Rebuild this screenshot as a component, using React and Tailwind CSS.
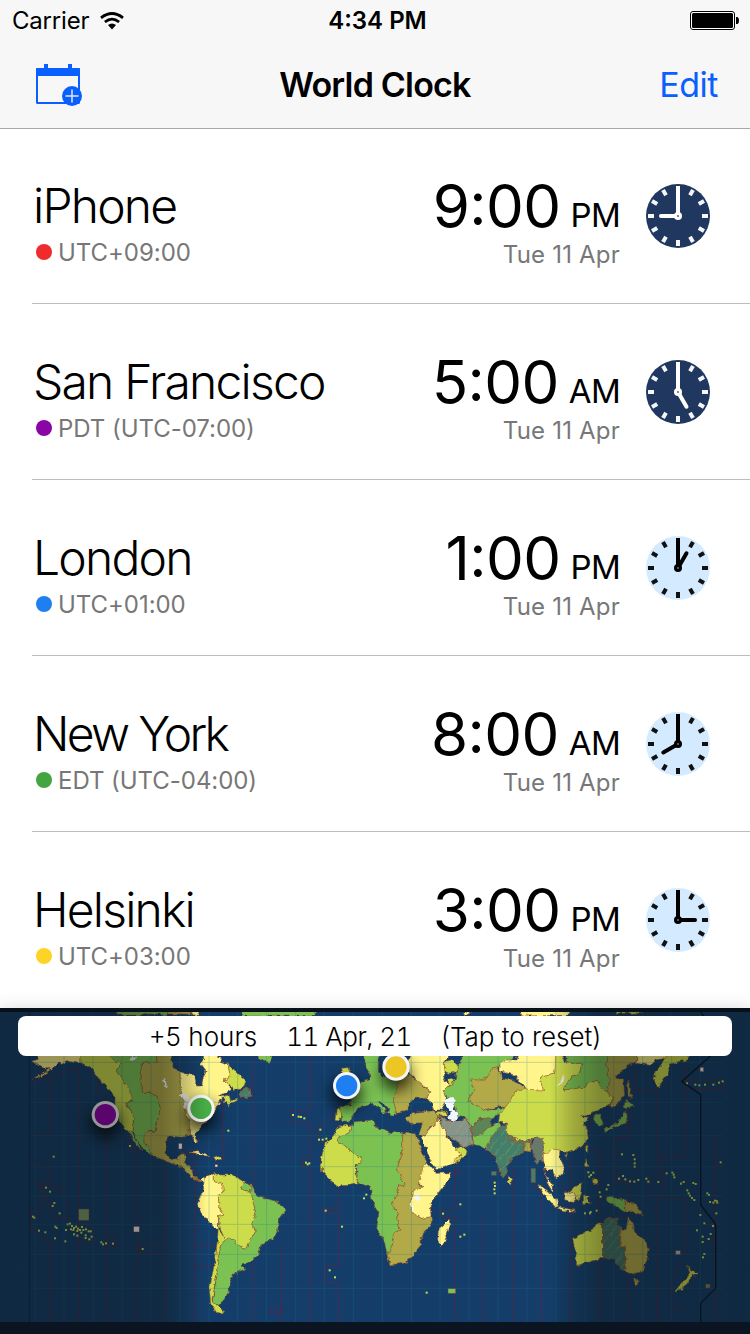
const cities = [
  { name: "iPhone", zone: "UTC+09:00", dot: "bg-[#f02b2d]", time: ["9", "00"], period: "PM", hour: 9, night: true },
  { name: "San Francisco", zone: "PDT (UTC-07:00)", dot: "bg-[#8a05a5]", time: ["5", "00"], period: "AM", hour: 5, night: true },
  { name: "London", zone: "UTC+01:00", dot: "bg-[#1e80f0]", time: ["1", "00"], period: "PM", hour: 1 },
  { name: "New York", zone: "EDT (UTC-04:00)", dot: "bg-[#43a441]", time: ["8", "00"], period: "AM", hour: 8, tight: true },
  { name: "Helsinki", zone: "UTC+03:00", dot: "bg-[#fdd327]", time: ["3", "00"], period: "PM", hour: 3 },
];

const LIME = "#cddc4b";
const GREEN = "#7bc253";
const OLIVE = "#b2aa48";
const PALE = "#fff58a";
const TEAL = "#447f69";
const GREY = "#86948a";

// Time zone areas, grouped by map section; x is the section's left edge
const sections = [
  {
    x: 0,
    areas: [
      [PALE, "105,150 243,150 243,190 225,188 200,182 185,190 178,186 165,200 150,210 120,230 92,243 120,225 150,205 135,207 120,198 105,188 95,183 115,178"],
      [LIME, "243,140 340,140 365,190 350,215 365,235 390,265 400,295 380,310 385,325 400,345 400,392 390,400 362,372 345,330 345,290 325,265 300,240 275,205 243,188"],
      [GREEN, "315,150 470,150 470,187 424,187 424,277 450,277 475,290 480,325 475,355 465,392 435,397 432,425 460,470 440,455 410,420 400,392 400,345 385,325 380,310 398,300 388,265 350,215 365,188 345,185"],
      [OLIVE, "470,150 525,150 512,180 518,200 540,215 542,290 560,310 555,340 570,360 567,405 545,412 510,408 497,422 495,460 510,478 532,480 540,462 557,462 550,492 575,500 578,525 595,540 575,535 545,500 520,492 460,468 432,425 432,397 465,395 475,355 480,325 475,290 450,277 424,277 424,187 470,187"],
      [PALE, "540,215 560,222 582,225 590,240 590,258 605,258 610,235 618,215 600,190 612,178 605,150 645,150 665,185 685,195 690,235 672,240 690,255 690,270 655,288 670,290 650,320 640,340 620,365 600,385 585,405 596,430 588,432 575,405 568,400 570,360 555,340 560,310 542,290"],
      [LIME, "685,190 700,210 720,228 738,245 722,268 700,268 690,255 672,240 690,232"],
      [LIME, "665,290 690,285 695,302 715,297 705,308 685,314 672,304"],
      [TEAL, "718,282 735,262 755,270 755,292 722,292"],
      [GREEN, "385,390 395,390 405,415 426,448 405,432"],
      [PALE, "570,457 590,452 630,466 618,468 590,460"],
      [LIME, "638,472 650,468 664,477 645,481"],
      [PALE, "582,533 600,542 612,530 618,548 606,546 598,542"],
      [PALE, "620,525 640,518 640,545 668,550 670,575 655,585 657,620 672,645 655,650 656,692 640,680 605,640 592,610 600,590 610,570 612,545"],
      [LIME, "640,520 660,525 700,525 735,547 725,560 735,575 755,577 758,600 768,640 757,665 767,695 750,718 740,748 725,745 690,714 675,718 662,690 655,650 672,645 657,620 655,585 670,575 668,550 640,545"],
      [LIME, "655,688 664,700 675,718 668,722 655,760 655,800 645,850 636,900 650,915 665,932 675,938 650,938 632,908 628,870 638,820 648,765"],
      [GREEN, "675,718 690,714 725,745 740,748 750,720 767,695 757,665 768,640 758,600 750,555 765,580 783,590 830,605 858,627 838,655 833,690 822,717 800,722 782,735 775,765 750,788 725,795 732,808 700,822 690,850 683,880 660,915 637,905 645,860 655,800 655,760 668,722"],
      [GREEN, "725,558 735,549 752,555 752,575 735,575"],
      [GREEN, "350,30 505,30 500,45 350,45"],
      [OLIVE, "505,30 570,30 570,42 505,42"],
      [PALE, "570,30 600,30 598,46 575,44"],
      [GREEN, "725,30 950,30 945,48 730,48"],
    ],
  },
  {
    x: 750,
    areas: [
      [GREEN, "15,150 65,150 60,187 45,184 25,176"],
      [LIME, "265,385 290,374 303,378 300,395 262,415 262,423 333,475 333,492 315,497 318,520 323,535 320,552 300,555 265,558 240,540 215,515 213,480 222,440 240,420 255,400"],
      [GREEN, "303,378 310,366 370,360 372,378 405,392 425,403 433,390 455,398 455,460 440,510 468,555 445,560 445,590 428,600 430,625 445,640 440,655 450,690 430,700 425,757 410,755 400,715 380,690 387,640 366,600 362,562 340,558 323,550 320,498 333,492 333,475 262,423 262,415 300,395"],
      [OLIVE, "455,398 498,402 510,440 528,485 515,530 505,550 518,560 487,575 482,620 490,640 515,655 543,650 545,675 515,705 512,735 485,775 460,790 420,794 410,757 425,757 430,700 450,690 440,655 445,640 430,625 428,600 445,590 445,560 468,555 440,510 455,460"],
      [PALE, "528,485 545,505 560,520 605,518 600,535 555,590 540,610 543,650 515,655 490,640 482,620 487,575 518,560 505,545"],
      [PALE, "597,658 600,675 585,720 575,737 563,725 565,690 580,678"],
      [PALE, "515,415 540,385 565,360 585,385 592,410 610,432 620,450 632,455 630,475 612,487 580,500 560,512 545,485"],
      [LIME, "634,440 655,455 640,475 615,488 612,478 632,470 630,455 615,450"],
      [GREEN, "345,150 385,150 385,215 400,232 440,225 448,235 440,270 430,300 440,340 430,345 405,335 420,333 395,306 383,302 405,330 402,342 382,318 368,310 345,318 325,326 310,345 298,364 275,362 272,320 300,318 305,300 285,290 310,275 335,245 360,240 358,215 345,195"],
      [LIME, "262,328 274,328 270,360 258,358"],
      [LIME, "275,205 297,203 300,222 278,222"],
      [OLIVE, "480,222 495,240 510,240 520,258 543,275 530,292 495,295 475,310 470,328 460,336 440,340 430,300 440,270 445,235"],
      [OLIVE, "468,350 500,336 555,332 568,345 562,365 540,382 520,408 510,400 517,368 480,370 470,362"],
      [PALE, "490,150 610,150 582,185 585,215 580,240 600,255 580,275 590,300 575,330 553,330 545,312 530,293 543,275 520,255 495,235 478,220 470,190"],
      [GREEN, "655,150 810,150 780,185 750,200 722,205 722,225 690,240 662,240 675,268 655,300 665,310 690,320 702,333 750,325 775,320 770,336 750,345 720,355 690,355 665,378 645,350 620,345 610,300 590,290 580,275 600,255 620,238 622,195"],
      [LIME, "582,185 605,180 622,195 620,215 600,220 585,213"],
      [LIME, "590,240 605,235 615,238 600,255"],
      [LIME, "560,335 590,333 598,348 575,348"],
      [OLIVE, "662,240 690,240 720,225 722,205 745,200 755,235 790,240 830,270 795,275 775,320 750,318 702,333 690,320 665,310 655,300 675,268"],
      [GREY, "567,348 590,362 620,362 650,358 665,380 665,410 672,432 640,440 600,412 580,385"],
      ["#5d8456", "665,380 690,357 725,352 720,380 700,400 668,410"],
      [GREEN, "668,410 700,400 725,375 745,366 756,385 725,412 712,445 672,432"],
      [TEAL, "708,448 725,412 745,385 770,370 775,405 825,430 820,455 795,470 770,495 775,515 757,535 742,490 730,462"],
      [LIME, "775,530 785,538 782,552 774,545"],
      [PALE, "640,38 660,30 665,36 645,48"],
    ],
  },
  {
    x: 1500,
    areas: [
      [PALE, "0,188 15,180 50,180 60,150 170,150 170,212 122,235 130,270 80,270 45,225 0,215"],
      [LIME, "20,370 -5,365 0,340 20,320 45,275 80,268 130,270 120,235 165,215 168,150 200,190 245,190 240,215 210,235 190,270 225,265 255,262 265,245 290,245 320,280 340,290 330,315 270,340 242,350 268,352 253,372 262,400 265,415 245,440 200,460 170,450 130,460 125,415 95,415 65,425 20,405"],
      [GREEN, "195,150 325,150 320,200 330,240 320,280 290,245 265,245 255,262 225,265 190,270 210,235 240,215 245,190 200,190"],
      [OLIVE, "325,150 410,150 410,190 385,195 345,235 370,238 374,285 350,315 330,320 340,290 320,280 330,240 320,200"],
      [PALE, "410,150 505,150 500,175 465,180 450,196 410,190"],
      [LIME, "505,150 580,150 560,180 505,192 507,215 475,262 463,245 465,215 490,190"],
      [OLIVE, "383,235 390,260 393,295 384,285"],
      [GREEN, "380,300 402,318 380,328 368,320"],
      [GREEN, "375,335 382,345 378,370 350,378 315,398 313,385 350,370 368,350"],
      [GREEN, "282,348 300,345 310,370 297,378 285,360"],
      [TEAL, "22,408 65,425 95,420 92,432 60,432 28,418"],
      ["#66796b", "90,440 105,415 130,412 130,450 138,470 128,490 120,480 110,495 98,455"],
      [OLIVE, "72,430 90,430 90,455 75,452"],
      [PALE, "130,460 160,448 180,450 178,470 192,500 190,525 170,535 155,510 135,505 130,480"],
      [PALE, "133,500 140,530 160,560 158,575 142,550"],
      [PALE, "112,552 140,570 170,600 175,620 160,618 140,595"],
      [PALE, "172,620 225,630 222,637 175,628"],
      [LIME, "245,548 242,575 232,605 225,578 195,580 220,565"],
      [PALE, "192,578 225,578 230,590 225,605 195,600"],
      [LIME, "250,588 275,588 260,597 272,612 262,608 252,618"],
      [GREEN, "320,590 375,600 377,638 350,620 325,605"],
      [OLIVE, "377,600 405,615 430,645 400,635 377,638"],
      [LIME, "258,478 268,500 256,500"],
      [LIME, "278,535 292,542 288,553 278,548"],
      [LIME, "258,435 265,440 262,455 256,450"],
      [LIME, "190,465 202,462 198,475"],
      [LIME, "218,715 240,705 270,690 300,668 308,672 308,775 270,785 230,797 228,765"],
      ["#3f6f63", "308,672 320,655 355,658 350,675 362,685 362,740 377,740 377,815 350,790 330,770 308,775"],
      [OLIVE, "362,685 378,690 385,650 395,665 405,700 430,715 448,745 440,785 425,815 395,822 377,815 377,740 362,740"],
      [OLIVE, "400,836 418,840 410,856 404,852"],
      [LIME, "562,795 575,812 592,820 570,840 550,865 528,877 530,862 560,835 570,820"],
      [PALE, "60,30 215,30 205,46 70,48"],
      [LIME, "352,30 432,30 428,40 352,40"],
    ],
  },
];

const hatched = [TEAL, GREY, "#3f6f63"];

const lakes = [
  "535,290 550,278 572,292 562,310 558,328 552,320 554,298",
  "486,240 495,238 502,262 496,262",
  "385,180 400,168 410,172 398,182",
  "1335,300 1355,292 1367,300 1360,325 1373,345 1365,362 1345,357 1352,335 1338,315",
  "1242,588 1258,583 1260,597 1245,602",
  "1230,612 1236,608 1238,625 1243,636 1234,630",
  "1664,256 1680,248 1694,226 1694,240 1682,254",
];

// Enclosed zones around small islands: x, y, width, height, fill
const boxes = [
  [236, 627, 31, 34, "#7b9a6c"],
  [536, 430, 10, 17, "#eef0f5"],
  [645, 494, 8, 7, "#eef0f5"],
  [401, 679, 17, 17, "#eef0f5"],
  [1344, 866, 23, 14, GREEN],
  [1474, 514, 15, 12, TEAL],
  [1593, 505, 14, 43, TEAL],
  [2027, 752, 14, 12, "#b5b9b4"],
  [2117, 852, 13, 12, "#6f8a66"],
  [2100, 202, 11, 13, "#eef0f5"],
];

const islands = [
  [138, 563], [150, 575], [163, 609], [158, 618], [179, 640], [99, 650], [103, 653], [117, 692], [136, 697],
  [166, 680], [170, 684], [165, 715], [196, 724], [198, 690], [203, 673], [210, 671], [216, 678], [222, 684],
  [228, 680], [234, 686], [240, 690], [246, 681], [213, 688], [220, 690], [232, 693], [244, 698], [250, 690],
  [258, 688], [266, 694], [272, 694], [257, 706], [257, 714], [268, 718], [275, 710], [222, 703], [232, 707],
  [304, 727], [309, 733], [318, 730], [339, 731], [428, 747], [161, 470], [685, 392], [390, 438],
  [879, 345], [896, 350], [903, 351], [913, 355], [961, 389], [957, 419], [968, 419], [979, 416],
  [918, 488], [923, 493], [928, 490], [977, 632], [1026, 680], [989, 811], [1005, 832], [1099, 584], [1092, 595],
  [1280, 878], [1329, 641], [1381, 613], [1381, 710], [1393, 704], [1484, 548], [1485, 558], [1483, 568], [1484, 580],
  [2061, 250], [2086, 254], [2098, 256], [2115, 254], [2140, 254], [2157, 248], [2168, 244],
  [1866, 463], [1900, 465], [1904, 478], [1904, 490], [1904, 500], [2162, 487], [1857, 536], [1869, 528], [1876, 538],
  [1890, 544], [1903, 545], [1915, 540], [1939, 536], [1945, 545], [1975, 546], [2000, 520], [2017, 518], [2021, 524],
  [2023, 532], [2043, 551], [2051, 546], [2080, 549], [2087, 552], [2062, 571], [2066, 580], [2070, 587], [2076, 594],
  [2083, 600], [2122, 580], [2127, 585], [2130, 606], [2140, 608], [2150, 603], [2152, 608], [2145, 602], [2149, 640],
  [2101, 645], [2113, 670], [2139, 678], [2091, 691], [2108, 710], [2126, 717], [2132, 702], [2108, 726], [2113, 762],
  [2109, 772], [1765, 517], [1773, 525], [1780, 518], [1768, 530], [1790, 632], [1772, 636], [1755, 640], [1820, 568],
  [1825, 555], [1799, 577], [1802, 590], [1770, 640],
];

const zoneLines = [
  "M88 250L236 202M150 230V407H88M88 497H150V543H112V557H125V631H93V687L136 725H150V967M125 557H178L206 625V656H165Z",
  "M236 202V727H272L284 706L262 655M236 727V967M290 235V270L322 290V967M322 714H350V740H322M410 410V967M385 410V445H410",
  "M497 490V733H418V759H497V967M584 445V967M584 733H650V798H584M563 447V462H600M670 300V480M757 165V967",
  "M844 740V967M811 925H844V942H811ZM930 165V333H875V368H930V475H907V503H930V967M1008 332L955 388V423H985M1017 560V625H972V637H1017V797H973V851H1017V967",
  "M1364 487V632H1322V650H1364V967M1378 505V520H1364M1451 640V967M1538 500V967M1593 545L1624 580V967M1712 480V967M1692 550V590M1775 165V400M1775 450H1798V967",
  "M1905 200V270L1970 270V530H1950V585H1972V967M2057 165V470H1987V595H2057V765L2016 830V925H2057M1886 967V550H1847V412H1886V320M2145 408V497H2168M2145 497V967M2165 408H2145M2057 240H2170V268H2057M2110 673H2145V725H2115",
];

const verticals = [106, 192, 279, 366, 453, 540, 627, 713, 800, 887, 973, 1060, 1147, 1234, 1320, 1407, 1494, 1581, 1668, 1755, 1841, 1928, 2015, 2101];
const horizontals = [187, 307, 407, 500, 587, 673, 763, 865];

const markers = [
  { x: 316, y: 344, color: "#8f00ac" },
  { x: 603, y: 325, color: "#47ad45" },
  { x: 1040, y: 257, color: "#1e80f0" },
  { x: 1188, y: 201, color: "#ecc624" },
];

const WifiIcon = () => (
  <svg className="h-[18px] w-6" viewBox="0 0 24 18">
    <g fill="none" stroke="#000" strokeWidth="2.8">
      <path d="M1 5.8Q12-2.8 23 5.8" />
      <path d="M4.9 10Q12 4.2 19.1 10" />
    </g>
    <path d="M8 13Q12 10 16 13L12 17.4Z" />
  </svg>
);

const BatteryIcon = () => (
  <svg className="h-[19px] w-[49px]" viewBox="0 0 49 19">
    <rect x=".5" y=".5" width="44" height="18" rx="2.5" fill="#fff" stroke="#000" />
    <rect x="2" y="2" width="41" height="15" rx="1.5" />
    <path d="M46 6h1.5Q49 6.5 49 9.5T47.5 13H46Z" />
  </svg>
);

const CalendarIcon = () => (
  <svg className="mt-0.5 h-[42px] w-[46px]" viewBox="0 0 46 42">
    <rect x="1" y="5" width="42" height="34" rx=".5" fill="none" stroke="#0a60ff" strokeWidth="2" />
    <path d="M0 12V5q0-1 1-1h7V0h4v4h20V0h4v4h7q1 0 1 1v7Z" fill="#0a60ff" />
    <circle cx="36" cy="32" r="10" fill="#0a60ff" />
    <path d="M29.5 32h13M36 25.5v13" stroke="#dfeaff" strokeWidth="1.5" />
  </svg>
);

const ClockFace = ({ hour, night }) => {
  const hand = night ? "#fff" : "#000";
  return (
    <svg className="h-16 w-16" viewBox="0 0 64 64">
      <circle cx="32" cy="32" r="32" fill={night ? "#20375f" : "#d4ebff"} />
      {Array.from({ length: 12 }, (_, i) => (
        <rect key={i} x="30" y="2" width="4" height="6" fill={night ? "#f4f6fa" : "#111"} transform={`rotate(${i * 30} 32 32)`} />
      ))}
      <path d="M32 32V2" stroke={hand} strokeWidth="4" />
      <path d="M32 32V15" stroke={hand} strokeWidth="4" strokeLinecap="round" transform={`rotate(${hour * 30} 32 32)`} />
      <circle cx="32" cy="32" r="4" fill={hand} />
      <rect x="31" y="31" width="2" height="2" fill={night ? "#888" : "#555"} />
    </svg>
  );
};

const CityRow = ({ city }) => (
  <li className="ml-8 flex h-44 justify-between border-b border-[#bcbcbc] pr-10 last:border-transparent">
    <div className="pt-12">
      <h2 className={`ml-px text-[48px] leading-[60px] font-light text-black ${city.tight ? "tracking-[-2.7px]" : "tracking-[-1.8px]"}`}>
        {city.name}
      </h2>
      <p className="mt-px ml-1 flex items-center gap-1.5 text-[24px] leading-8 tracking-[-0.05px] text-[#777]">
        <span className={`mb-0.5 size-4 rounded-full ${city.dot}`} />
        {city.zone}
      </p>
    </div>
    <div className="flex">
      <div className="pt-[42px] text-right">
        <p className="text-[60px] leading-[72px] tracking-[-0.6px] text-black">
          {city.time[0]}
          <span className="relative -top-[3px]">:</span>
          {city.time[1]}
          <span className="relative -top-px ml-2.5 text-[33px] tracking-[-0.7px]">{city.period}</span>
        </p>
        <p className="-mt-[11px] text-[24px] leading-7 tracking-[0.2px] text-[#777]">Tue 11 Apr</p>
      </div>
      <div className="mt-14 ml-[26px]">
        <ClockFace hour={city.hour} night={city.night} />
      </div>
    </div>
  </li>
);

const WorldMap = () => (
  <svg className="absolute inset-0 h-full w-full" viewBox="0 24 2250 978">
    <defs>
      <filter id="coast" x="0" y="0" width="2250" height="1002" filterUnits="userSpaceOnUse">
        <feTurbulence type="fractalNoise" baseFrequency="0.06" numOctaves="3" seed="4" />
        <feDisplacementMap in="SourceGraphic" scale="15" xChannelSelector="R" yChannelSelector="G" />
      </filter>
      <filter id="pinShadow" x="-100%" y="-100%" width="300%" height="300%">
        <feGaussianBlur stdDeviation="22" />
      </filter>
      <linearGradient id="night" gradientUnits="userSpaceOnUse" x1="0" x2="2250" y1="0" y2="0">
        <stop offset="0" stopColor="#0b0d0c" stopOpacity=".42" />
        <stop offset=".215" stopColor="#0b0d0c" stopOpacity=".4" />
        <stop offset=".245" stopColor="#0b0d0c" stopOpacity=".24" />
        <stop offset=".275" stopColor="#0b0d0c" stopOpacity="0" />
        <stop offset=".733" stopColor="#0b0d0c" stopOpacity="0" />
        <stop offset=".765" stopColor="#0b0d0c" stopOpacity=".24" />
        <stop offset=".8" stopColor="#0b0d0c" stopOpacity=".4" />
        <stop offset="1" stopColor="#0b0d0c" stopOpacity=".42" />
      </linearGradient>
      <pattern id="hatch" width="22" height="22" patternUnits="userSpaceOnUse" patternTransform="rotate(40)">
        <path d="M0 0V22" stroke="#a3b46a" strokeWidth="4" opacity=".4" />
      </pattern>
    </defs>
    <rect y="24" width="2250" height="978" fill="#143e69" />
    <path d={zoneLines.join("")} fill="none" stroke="#64233f" strokeWidth="2.5" opacity=".8" />
    <g filter="url(#coast)" strokeLinejoin="round">
      {sections.map((section) => (
        <g key={section.x} transform={`translate(${section.x} 0)`}>
          {section.areas.map(([color, points], i) => (
            <g key={i} stroke="#a0552c" strokeWidth="2" strokeOpacity=".8">
              <polygon points={points} fill={color} />
              {hatched.includes(color) && <polygon points={points} fill="url(#hatch)" />}
            </g>
          ))}
        </g>
      ))}
      {lakes.map((points) => (
        <polygon key={points} points={points} fill="#f3f6fa" />
      ))}
    </g>
    {boxes.map(([x, y, width, height, fill]) => (
      <rect key={x} x={x} y={y} width={width} height={height} fill={fill} stroke="#7a3a3f" strokeWidth="1.5" />
    ))}
    {islands.map(([x, y], i) => (
      <rect key={i} x={x - 3} y={y - 3} width="6" height="6" fill="#cddc4b" />
    ))}
    <g stroke="#18758c" strokeWidth="3" opacity=".25">
      {verticals.map((x) => <path key={x} d={`M${x} 36V966`} />)}
      {horizontals.map((y) => <path key={y} d={`M88 ${y}H2168`} />)}
    </g>
    {markers.map((m) => (
      <g key={m.x}>
        <circle cx={m.x} cy={m.y + 25} r="46" opacity=".75" filter="url(#pinShadow)" />
        <circle cx={m.x} cy={m.y} r="41" fill="#f5f5f7" />
        <circle cx={m.x} cy={m.y} r="32" fill={m.color} />
      </g>
    ))}
    <rect y="24" width="2250" height="978" fill="url(#night)" />
    {/* date line */}
    <path d="M2102 36L2140 90V160L2045 245L2102 283V615L2147 673V865L2102 910V967" fill="none" stroke="#07131e" strokeWidth="4" />
    <path d="M88 36V966" stroke="#0c2138" strokeWidth="5" />
    <rect y="24" width="2250" height="12" fill="#08111a" />
    <rect y="966" width="2250" height="36" fill="#0a1521" />
  </svg>
);

export default function App() {
  return (
    <main className="flex h-[1334px] w-[750px] flex-col overflow-hidden bg-white font-['Inter','Liberation_Sans',sans-serif]">
      <header className="relative h-32 bg-[#f7f7f7] shadow-[0_1px_0_#a7a7a7]">
        <div className="grid h-[41px] grid-cols-3 items-center pr-[11px] pl-3 text-[24px] leading-none text-black">
          <div className="flex items-center gap-[11px] tracking-[-0.2px]">
            Carrier
            <WifiIcon />
          </div>
          <p className="pl-1 text-center font-semibold whitespace-nowrap">4:34 PM</p>
          <div className="flex justify-end">
            <BatteryIcon />
          </div>
        </div>
        <div className="grid h-[87px] grid-cols-3 items-center pr-8 pb-px pl-9">
          <CalendarIcon />
          <h1 className="pr-1 text-center text-[34px] font-semibold tracking-[-0.8px] whitespace-nowrap text-black">World Clock</h1>
          <button className="justify-self-end text-[34px] tracking-[-0.5px] text-[#0a60ff]">Edit</button>
        </div>
      </header>
      <ul>
        {cities.map((city) => (
          <CityRow key={city.name} city={city} />
        ))}
      </ul>
      <section className="relative h-[326px] px-[18px] pt-2 shadow-[0_0_16px_rgba(0,0,0,0.15)]">
        <WorldMap />
        <button className="relative flex h-10 w-full items-center justify-center gap-[29px] rounded-lg bg-white text-[26px] font-light text-black">
          <span>+5 hours</span>
          <span className="tracking-[-0.5px] tabular-nums">11 Apr, 21</span>
          <span>(Tap to reset)</span>
        </button>
      </section>
    </main>
  );
}
